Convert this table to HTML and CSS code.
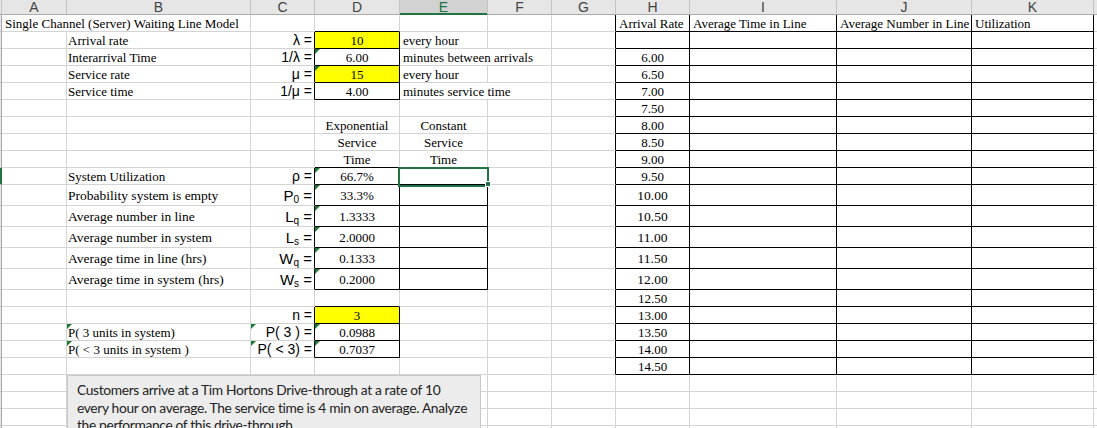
FILE: index.html
```html
<!DOCTYPE html>
<html>
<head>
<meta charset="utf-8">
<link rel="stylesheet" href="styles.css">
</head>
<body>
<div class="sheet">
<table class="grid">
<colgroup>
<col class="w-rh"><col class="w-a"><col class="w-b"><col class="w-c"><col class="w-d"><col class="w-e"><col class="w-f"><col class="w-g"><col class="w-h"><col class="w-i"><col class="w-j"><col class="w-k"><col class="w-l">
</colgroup>
<tr class="hdr">
<th class="rh"></th><th>A</th><th>B</th><th>C</th><th>D</th><th class="sel">E</th><th>F</th><th>G</th><th>H</th><th>I</th><th>J</th><th>K</th><th class="last"></th>
</tr>
<tr>
<th class="rh"></th><td colspan="2">Single Channel (Server) Waiting Line Model</td><td></td><td class="bb"></td><td></td><td></td><td class="br"></td><td class="bb br">Arrival Rate</td><td class="bb br">Average Time in Line</td><td class="bb br">Average Number in Line</td><td class="bb br">Utilization</td><td class="last"></td>
</tr>
<tr>
<th class="rh"></th><td></td><td class="lbl">Arrival rate</td><td class="sym br">λ =</td><td class="val y br bb">10</td><td>every hour</td><td></td><td class="br"></td><td class="val br bb"></td><td class="br bb"></td><td class="br bb"></td><td class="br bb"></td><td class="last"></td>
</tr>
<tr>
<th class="rh"></th><td></td><td class="lbl">Interarrival Time</td><td class="sym br">1/λ =</td><td class="val br bb tri">6.00</td><td colspan="2">minutes between arrivals</td><td class="br"></td><td class="val br bb">6.00</td><td class="br bb"></td><td class="br bb"></td><td class="br bb"></td><td class="last"></td>
</tr>
<tr>
<th class="rh"></th><td></td><td class="lbl">Service rate</td><td class="sym br">μ =</td><td class="val y br bb tri">15</td><td>every hour</td><td></td><td class="br"></td><td class="val br bb">6.50</td><td class="br bb"></td><td class="br bb"></td><td class="br bb"></td><td class="last"></td>
</tr>
<tr>
<th class="rh"></th><td></td><td class="lbl">Service time</td><td class="sym br">1/μ =</td><td class="val br bb">4.00</td><td colspan="2">minutes service time</td><td class="br"></td><td class="val br bb">7.00</td><td class="br bb"></td><td class="br bb"></td><td class="br bb"></td><td class="last"></td>
</tr>
<tr>
<th class="rh"></th><td></td><td></td><td></td><td></td><td></td><td></td><td class="br"></td><td class="val br bb">7.50</td><td class="br bb"></td><td class="br bb"></td><td class="br bb"></td><td class="last"></td>
</tr>
<tr>
<th class="rh"></th><td></td><td></td><td></td><td class="val">Exponential</td><td class="val">Constant</td><td></td><td class="br"></td><td class="val br bb">8.00</td><td class="br bb"></td><td class="br bb"></td><td class="br bb"></td><td class="last"></td>
</tr>
<tr>
<th class="rh"></th><td></td><td></td><td></td><td class="val">Service</td><td class="val">Service</td><td></td><td class="br"></td><td class="val br bb">8.50</td><td class="br bb"></td><td class="br bb"></td><td class="br bb"></td><td class="last"></td>
</tr>
<tr>
<th class="rh"></th><td></td><td></td><td></td><td class="val bb">Time</td><td class="val bb">Time</td><td></td><td class="br"></td><td class="val br bb">9.00</td><td class="br bb"></td><td class="br bb"></td><td class="br bb"></td><td class="last"></td>
</tr>
<tr>
<th class="rh on"></th><td></td><td class="lbl">System Utilization</td><td class="sym br">ρ =</td><td class="val br bb tri">66.7%</td><td class="br bb cur"></td><td></td><td class="br"></td><td class="val br bb">9.50</td><td class="br bb"></td><td class="br bb"></td><td class="br bb"></td><td class="last"></td>
</tr>
<tr class="tall">
<th class="rh"></th><td></td><td class="lbl big">Probability system is empty</td><td class="sym big br">P<sub>0</sub> =</td><td class="val br bb tri">33.3%</td><td class="br bb"></td><td></td><td class="br"></td><td class="val big br bb">10.00</td><td class="br bb"></td><td class="br bb"></td><td class="br bb"></td><td class="last"></td>
</tr>
<tr class="tall">
<th class="rh"></th><td></td><td class="lbl big">Average number in line</td><td class="sym big br">L<sub>q</sub> =</td><td class="val br bb tri">1.3333</td><td class="br bb"></td><td></td><td class="br"></td><td class="val big br bb">10.50</td><td class="br bb"></td><td class="br bb"></td><td class="br bb"></td><td class="last"></td>
</tr>
<tr class="tall">
<th class="rh"></th><td></td><td class="lbl big">Average number in system</td><td class="sym big br">L<sub>s</sub> =</td><td class="val br bb tri">2.0000</td><td class="br bb"></td><td></td><td class="br"></td><td class="val big br bb">11.00</td><td class="br bb"></td><td class="br bb"></td><td class="br bb"></td><td class="last"></td>
</tr>
<tr class="tall">
<th class="rh"></th><td></td><td class="lbl big">Average time in line (hrs)</td><td class="sym big br">W<sub>q</sub> =</td><td class="val br bb tri">0.1333</td><td class="br bb"></td><td></td><td class="br"></td><td class="val big br bb">11.50</td><td class="br bb"></td><td class="br bb"></td><td class="br bb"></td><td class="last"></td>
</tr>
<tr class="tall">
<th class="rh"></th><td></td><td class="lbl big">Average time in system (hrs)</td><td class="sym big br">W<sub>s</sub> =</td><td class="val br bb tri">0.2000</td><td class="br bb"></td><td></td><td class="br"></td><td class="val big br bb">12.00</td><td class="br bb"></td><td class="br bb"></td><td class="br bb"></td><td class="last"></td>
</tr>
<tr>
<th class="rh"></th><td></td><td></td><td></td><td class="bb"></td><td></td><td></td><td class="br"></td><td class="val br bb">12.50</td><td class="br bb"></td><td class="br bb"></td><td class="br bb"></td><td class="last"></td>
</tr>
<tr>
<th class="rh"></th><td></td><td></td><td class="sym2 br">n =</td><td class="val y br bb">3</td><td></td><td></td><td class="br"></td><td class="val br bb">13.00</td><td class="br bb"></td><td class="br bb"></td><td class="br bb"></td><td class="last"></td>
</tr>
<tr>
<th class="rh"></th><td></td><td class="lbl tri">P( 3 units in system)</td><td class="sym2 br tri">P( 3 ) =</td><td class="val br bb tri">0.0988</td><td></td><td></td><td class="br"></td><td class="val br bb">13.50</td><td class="br bb"></td><td class="br bb"></td><td class="br bb"></td><td class="last"></td>
</tr>
<tr>
<th class="rh"></th><td></td><td class="lbl tri">P( &lt; 3 units in system )</td><td class="sym2 br tri">P( &lt; 3) =</td><td class="val br bb tri">0.7037</td><td></td><td></td><td class="br"></td><td class="val br bb">14.00</td><td class="br bb"></td><td class="br bb"></td><td class="br bb"></td><td class="last"></td>
</tr>
<tr>
<th class="rh"></th><td></td><td></td><td></td><td></td><td></td><td></td><td class="br"></td><td class="val br bb">14.50</td><td class="br bb"></td><td class="br bb"></td><td class="br bb"></td><td class="last"></td>
</tr>
<tr>
<th class="rh"></th><td></td><td></td><td></td><td></td><td></td><td></td><td></td><td></td><td></td><td></td><td></td><td class="last"></td>
</tr>
<tr>
<th class="rh"></th><td></td><td></td><td></td><td></td><td></td><td></td><td></td><td></td><td></td><td></td><td></td><td class="last"></td>
</tr>
<tr>
<th class="rh"></th><td></td><td></td><td></td><td></td><td></td><td></td><td></td><td></td><td></td><td></td><td></td><td class="last"></td>
</tr>
<tr>
<th class="rh"></th><td></td><td></td><td></td><td></td><td></td><td></td><td></td><td></td><td></td><td></td><td></td><td class="last"></td>
</tr>
</table>
<div class="note">Customers arrive at a Tim Hortons Drive-through at a rate of 10<br>every hour on average. The service time is 4 min on average. Analyze<br>the performance of this drive-through.</div>
</div>
</body>
</html>
```
FILE: styles.css
```css
html, body {
  margin: 0;
  padding: 0;
  background: #ffffff;
  overflow: hidden;
}
.sheet {
  position: relative;
  width: 1097px;
  height: 428px;
  overflow: hidden;
}
.grid {
  table-layout: fixed;
  border-collapse: separate;
  border-spacing: 0;
  width: 1097px;
  font-family: "Liberation Serif", "Times New Roman", serif;
  font-size: 13px;
  color: #000;
}
.w-rh { width: 2px; }
.w-a { width: 65px; }
.w-b { width: 184px; }
.w-c { width: 64px; }
.w-d { width: 85px; }
.w-e { width: 88px; }
.w-f { width: 64px; }
.w-g { width: 64px; }
.w-h { width: 74px; }
.w-i { width: 147px; }
.w-j { width: 135px; }
.w-k { width: 122px; }
.w-l { width: 3px; }

.grid td, .grid th {
  box-sizing: border-box;
  padding: 0 3px;
  height: 17px;
  line-height: 15px;
  border-right: 1px solid #d4d4d4;
  border-bottom: 1px solid #d4d4d4;
  white-space: nowrap;
  overflow: hidden;
  vertical-align: bottom;
  text-align: left;
  font-weight: normal;
  position: relative;
}
.grid tr.tall td, .grid tr.tall th {
  height: 21px;
  line-height: 18px;
}
.grid tr.hdr th {
  height: 15px;
  line-height: 14px;
  background: #e6e6e6;
  border-right: 1px solid #c4c4c4;
  border-bottom: 1px solid #ababab;
  font-family: "Liberation Sans", Arial, sans-serif;
  font-size: 14px;
  color: #444;
  text-align: center;
  vertical-align: middle;
}
.grid tr.hdr th.sel {
  background: #d2d2d2;
  color: #217346;
  border-bottom-color: #217346;
  box-shadow: inset 0 -1px 0 #217346;
}
.grid th.rh {
  padding: 0;
  background: #e6e6e6;
  border-right: 1px solid #a8a8a8;
  border-bottom: 1px solid #c4c4c4;
}
.grid th.rh.on {
  background: #217346;
  border-right-color: #217346;
}
.grid tr.hdr th.rh {
  border-bottom: 1px solid #ababab;
}
.grid .last {
  border-right: none;
  padding: 0;
}
.grid tr.hdr th.last {
  border-right: none;
}

.grid td.bb { border-bottom-color: #000; }
.grid td.br { border-right-color: #000; }
.grid td.y { background: #ffff00; }
.grid td.val { text-align: center; }
.grid td.lbl { padding-left: 1px; }
.grid td.big { font-size: 13.5px; }
.grid td.sym {
  text-align: right;
  padding-right: 2px;
  font-family: "Liberation Sans", Arial, sans-serif;
  font-size: 14px;
}
.grid td.sym.big { font-size: 15px; }
.grid td.sym2 {
  text-align: right;
  padding-right: 2px;
  font-family: "Liberation Sans", Arial, sans-serif;
  font-size: 14px;
}
.grid sub {
  font-size: 10px;
  line-height: 0;
  vertical-align: -2px;
}
.grid td.tri::before {
  content: "";
  position: absolute;
  left: 0;
  top: 0;
  width: 0;
  height: 0;
  border-top: 5px solid #1e7b34;
  border-right: 5px solid transparent;
}
.grid td.cur {
  overflow: visible;
}
.grid td.cur::after {
  content: "";
  position: absolute;
  left: -2px;
  top: -1px;
  width: 91px;
  height: 20px;
  box-sizing: border-box;
  border: 2px solid #217346;
  z-index: 2;
}
.grid td.cur::before {
  content: "";
  position: absolute;
  right: -4px;
  bottom: -3px;
  width: 6px;
  height: 6px;
  background: #217346;
  border: 1px solid #fff;
  box-sizing: border-box;
  z-index: 3;
}

.note {
  position: absolute;
  left: 67px;
  top: 375px;
  width: 414px;
  height: 70px;
  box-sizing: border-box;
  padding: 5px 0 0 9px;
  background: #ececec;
  border: 1px solid #c8c8c8;
  font-family: "Lato", "Liberation Sans", sans-serif;
  font-size: 13.8px;
  letter-spacing: -0.35px;
  line-height: 17.6px;
  color: #222;
  white-space: nowrap;
}
```
